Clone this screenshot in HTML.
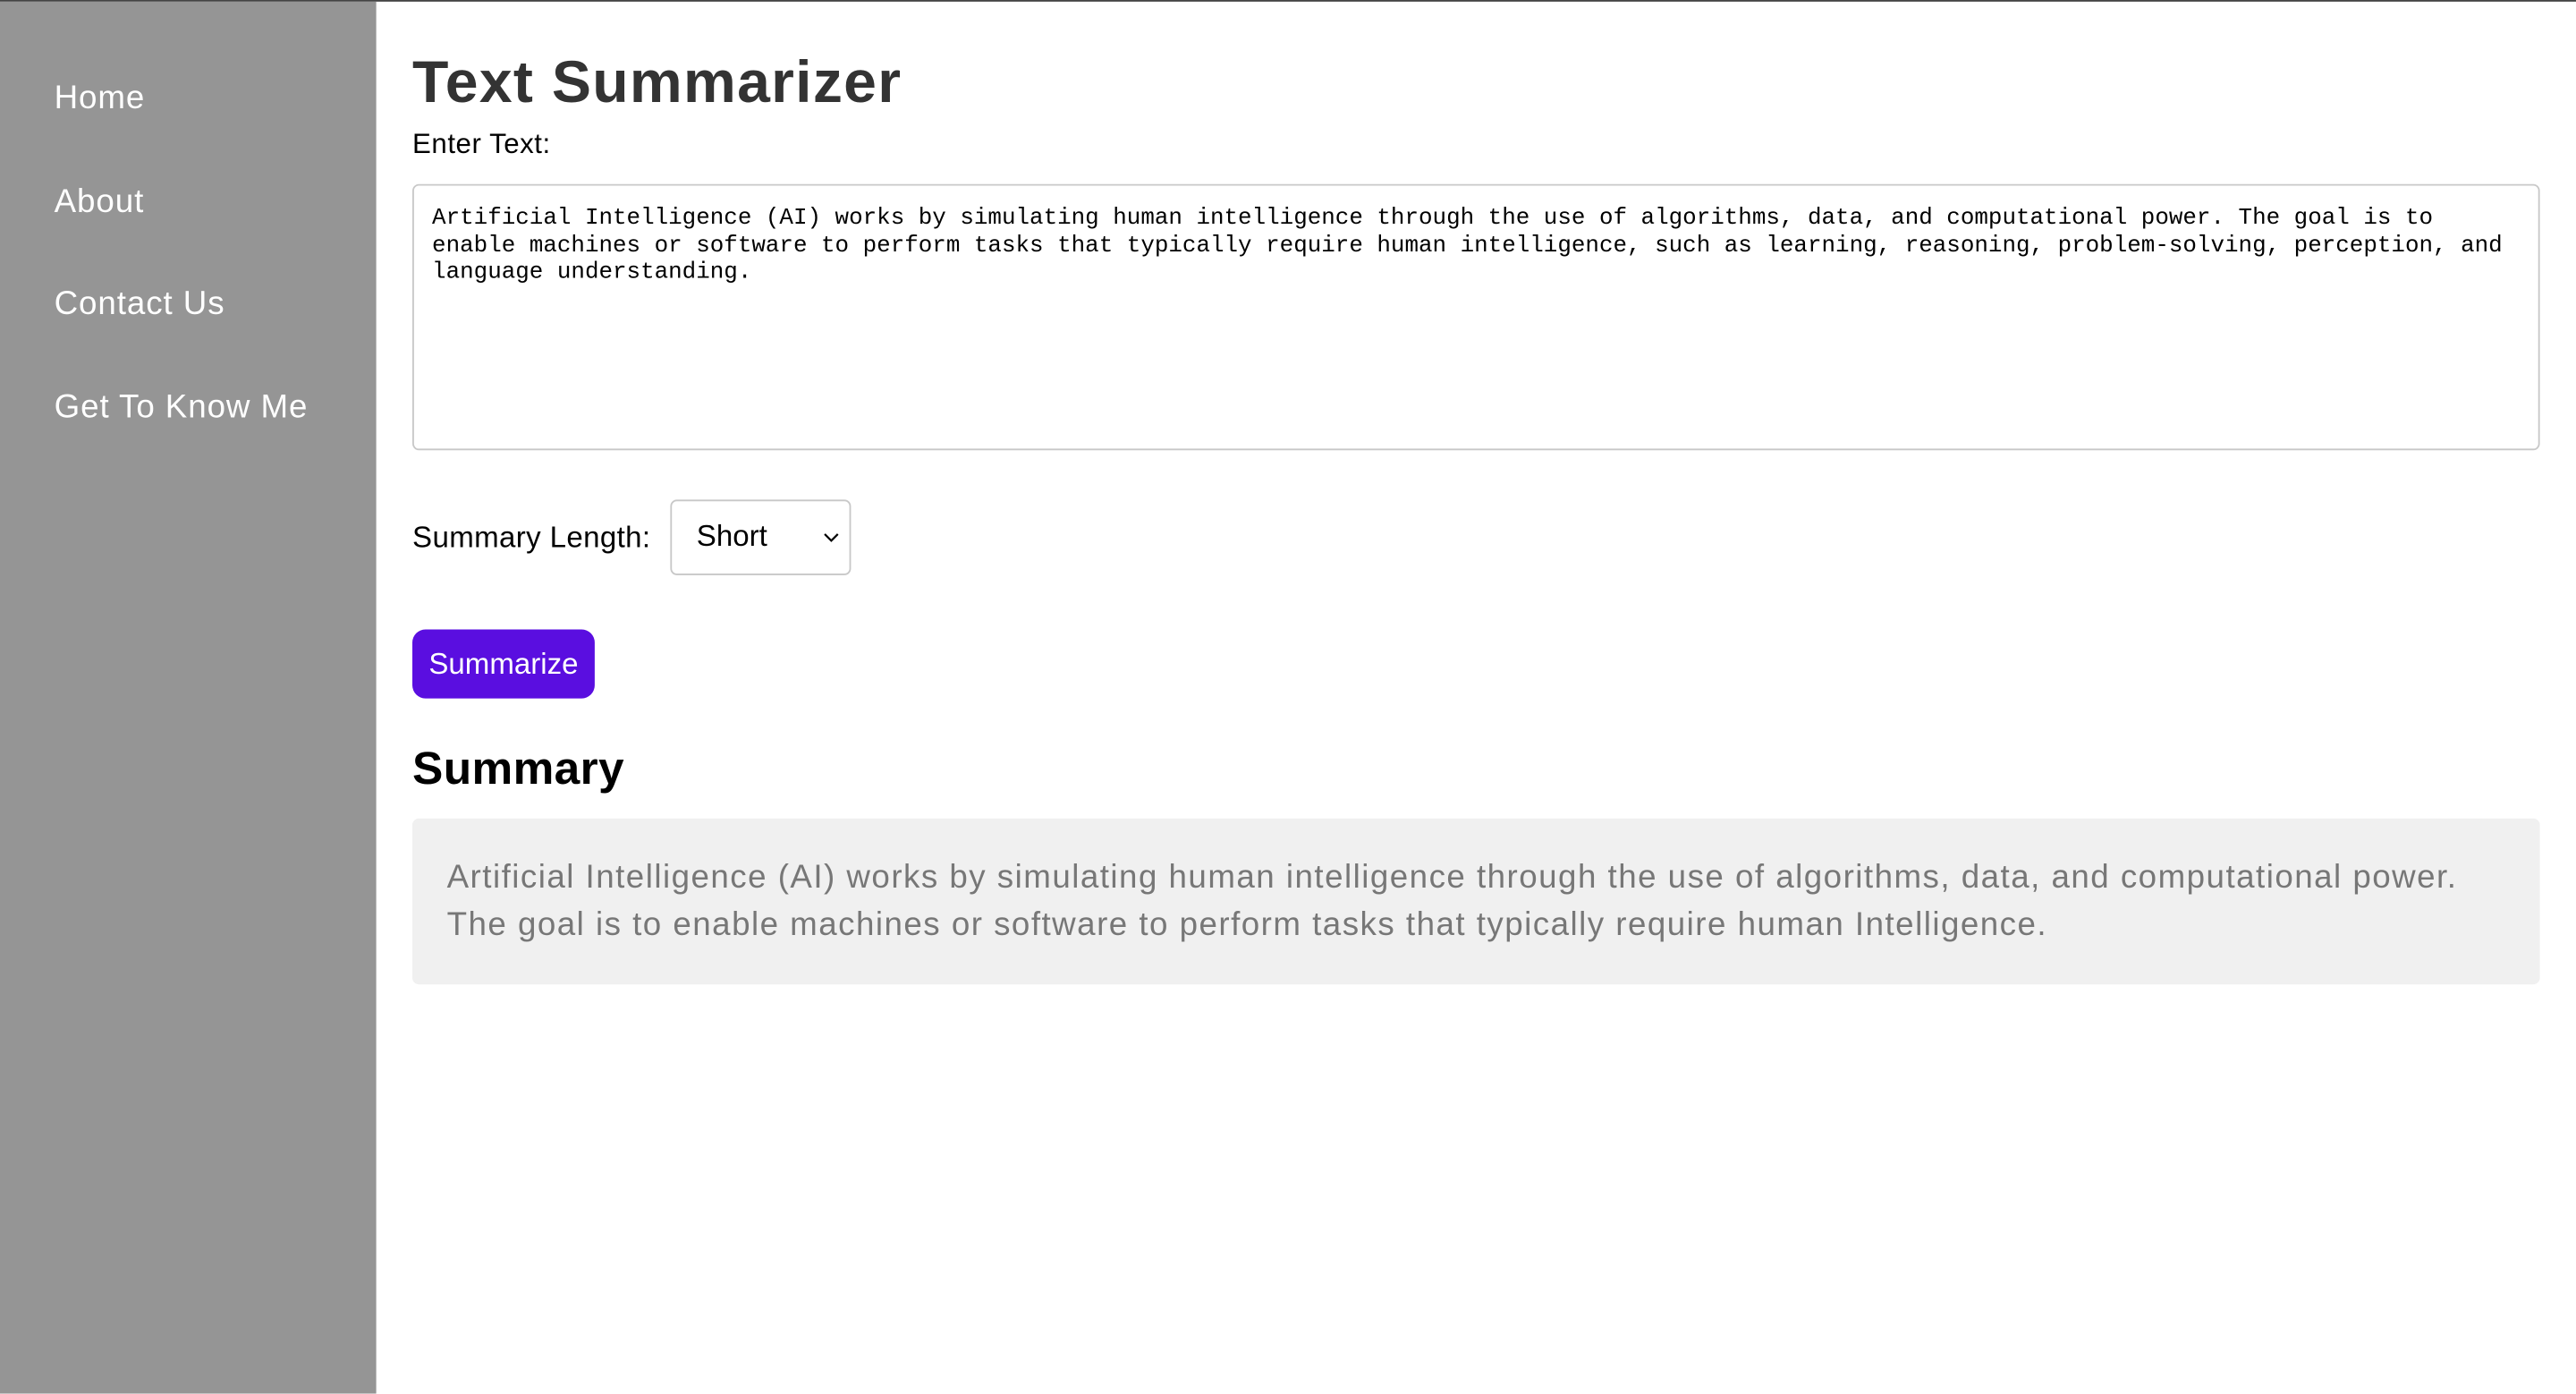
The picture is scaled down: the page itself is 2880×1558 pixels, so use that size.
<!DOCTYPE html>
<html><head><meta charset="utf-8"><style>
html,body{margin:0;padding:0;width:2880px;height:1558px;overflow:hidden;background:#fff}
#w{position:absolute;left:0;top:0;width:1568px;height:848px;transform:scale(1.83673);transform-origin:0 0;font-family:"Liberation Sans",sans-serif}
.top{position:absolute;left:0;top:0;width:1568px;height:1px;background:#444}
.side{position:absolute;left:0;top:1px;width:229px;height:847px;background:#959595}
.side a{position:absolute;left:33px;color:#fff;font-size:20px;text-decoration:none;line-height:24px;letter-spacing:0.5px}
h1{position:absolute;left:251px;top:29px;margin:0;font-size:36px;font-weight:bold;color:#333;line-height:42px;letter-spacing:0.7px}
.lbl{position:absolute;left:251px;top:78px;font-size:17px;color:#000;line-height:20px;letter-spacing:0.3px}
.ta{position:absolute;left:251px;top:112px;width:1293px;height:160px;border:1px solid #c8c8c8;border-radius:4px;box-sizing:content-box}
.ta pre{margin:0;position:absolute;left:11px;top:12px;font-family:"Liberation Mono",monospace;font-size:14.1px;line-height:16.5px;color:#000;white-space:pre;letter-spacing:0}
.sl{position:absolute;left:251px;top:316px;font-size:18px;line-height:22px;letter-spacing:0.2px}
.sel{position:absolute;left:408px;top:304px;width:108px;height:44px;border:1px solid #c8c8c8;border-radius:4px}
.sel span{position:absolute;left:15px;top:11px;font-size:18px}
.sel svg{position:absolute;right:6px;top:18px}
.btn{position:absolute;left:251px;top:383px;width:111px;height:42px;background:#5a0ee0;border-radius:8px;color:#fff;font-size:18px;text-align:center;line-height:42px}
h2{position:absolute;left:251px;top:451px;margin:0;font-size:28px;font-weight:bold;line-height:34px;color:#000;letter-spacing:0.2px}
.box{position:absolute;left:251px;top:498px;width:1295px;height:101px;background:#f0f0f0;border-radius:4px}
.box p{margin:0;position:absolute;left:21px;top:22px;font-size:20px;line-height:29px;color:#777;width:1280px;white-space:nowrap;letter-spacing:0.8px}
</style></head><body><div id="w">
<div class="top"></div>
<div class="side">
<a style="top:47px">Home</a>
<a style="top:110px">About</a>
<a style="top:172px">Contact Us</a>
<a style="top:235px">Get To Know Me</a>
</div>
<h1>Text Summarizer</h1>
<div class="lbl">Enter Text:</div>
<div class="ta"><pre>Artificial Intelligence (AI) works by simulating human intelligence through the use of algorithms, data, and computational power. The goal is to
enable machines or software to perform tasks that typically require human intelligence, such as learning, reasoning, problem-solving, perception, and
language understanding.</pre></div>
<div class="sl">Summary Length:</div>
<div class="sel"><span>Short</span><svg width="10" height="8" viewBox="0 0 10 8"><path d="M1 2L5 6L9 2" stroke="#000" fill="none" stroke-width="1.2"/></svg></div>
<div class="btn">Summarize</div>
<h2>Summary</h2>
<div class="box"><p>Artificial Intelligence (AI) works by simulating human intelligence through the use of algorithms, data, and computational power.<br>The goal is to enable machines or software to perform tasks that typically require human Intelligence.</p></div>
</div></body></html>
